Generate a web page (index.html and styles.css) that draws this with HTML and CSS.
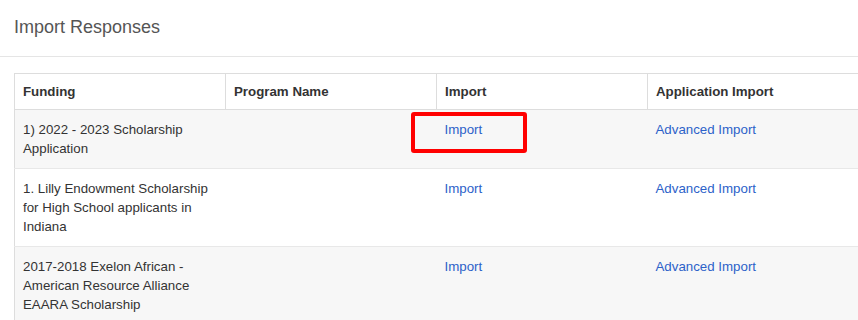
FILE: index.html
```html
<!DOCTYPE html>
<html lang="en">
<head>
    <meta charset="UTF-8">
    <meta name="viewport" content="width=device-width, initial-scale=1.0">
    <title>Import Responses</title>
    <link rel="stylesheet" href="styles.css">
</head>
<body>

    <div class="page-header">
        <h2>Import Responses</h2>
    </div>

    <div class="page-body">
        <table class="import-table">
            <thead>
                <tr>
                    <th>Funding</th>
                    <th>Program Name</th>
                    <th>Import</th>
                    <th>Application Import</th>
                </tr>
            </thead>
            <tbody>
                <tr>
                    <td>1) 2022 - 2023 Scholarship Application</td>
                    <td></td>
                    <td class="highlight-cell">
                        <a href="#">Import</a>
                        <span class="highlight-box"></span>
                    </td>
                    <td><a href="#">Advanced Import</a></td>
                </tr>
                <tr>
                    <td>1. Lilly Endowment Scholarship for High School applicants in Indiana</td>
                    <td></td>
                    <td><a href="#">Import</a></td>
                    <td><a href="#">Advanced Import</a></td>
                </tr>
                <tr>
                    <td>2017-2018 Exelon African - American Resource Alliance EAARA Scholarship</td>
                    <td></td>
                    <td><a href="#">Import</a></td>
                    <td><a href="#">Advanced Import</a></td>
                </tr>
            </tbody>
        </table>
    </div>

</body>
</html>
```

FILE: styles.css
```css
body {
    margin: 0;
    padding: 0;
    background-color: #FFFFFF;
    font-family: 'Liberation Sans', Arial, sans-serif;
    font-size: 13.3px;
    color: #333333;
    overflow: hidden;
}

.page-header {
    padding: 17px 14px 19px;
    border-bottom: 1px solid #E5E5E5;
}

.page-header h2 {
    margin: 0;
    font-size: 18px;
    font-weight: normal;
    line-height: 20px;
    color: #555555;
}

.page-body {
    padding: 16px 0 0 14px;
}

.import-table {
    width: 845px;
    table-layout: fixed;
    border-collapse: collapse;
    border: 1px solid #DDDDDD;
}

.import-table th {
    padding: 8px 8px;
    line-height: 19px;
    text-align: left;
    font-weight: bold;
    color: #333333;
    border: 1px solid #DDDDDD;
}

.import-table td {
    padding: 10px 8px;
    line-height: 19px;
    vertical-align: top;
    border-top: 1px solid #E8E8E8;
}

.import-table tbody tr:nth-child(odd) {
    background-color: #F7F7F7;
}

.import-table a {
    color: #2C62C9;
    text-decoration: none;
}

.highlight-cell {
    position: relative;
}

.highlight-box {
    position: absolute;
    left: -26px;
    top: 2px;
    width: 108px;
    height: 33px;
    border: 4px solid #FF0000;
    border-radius: 3px;
}
```
